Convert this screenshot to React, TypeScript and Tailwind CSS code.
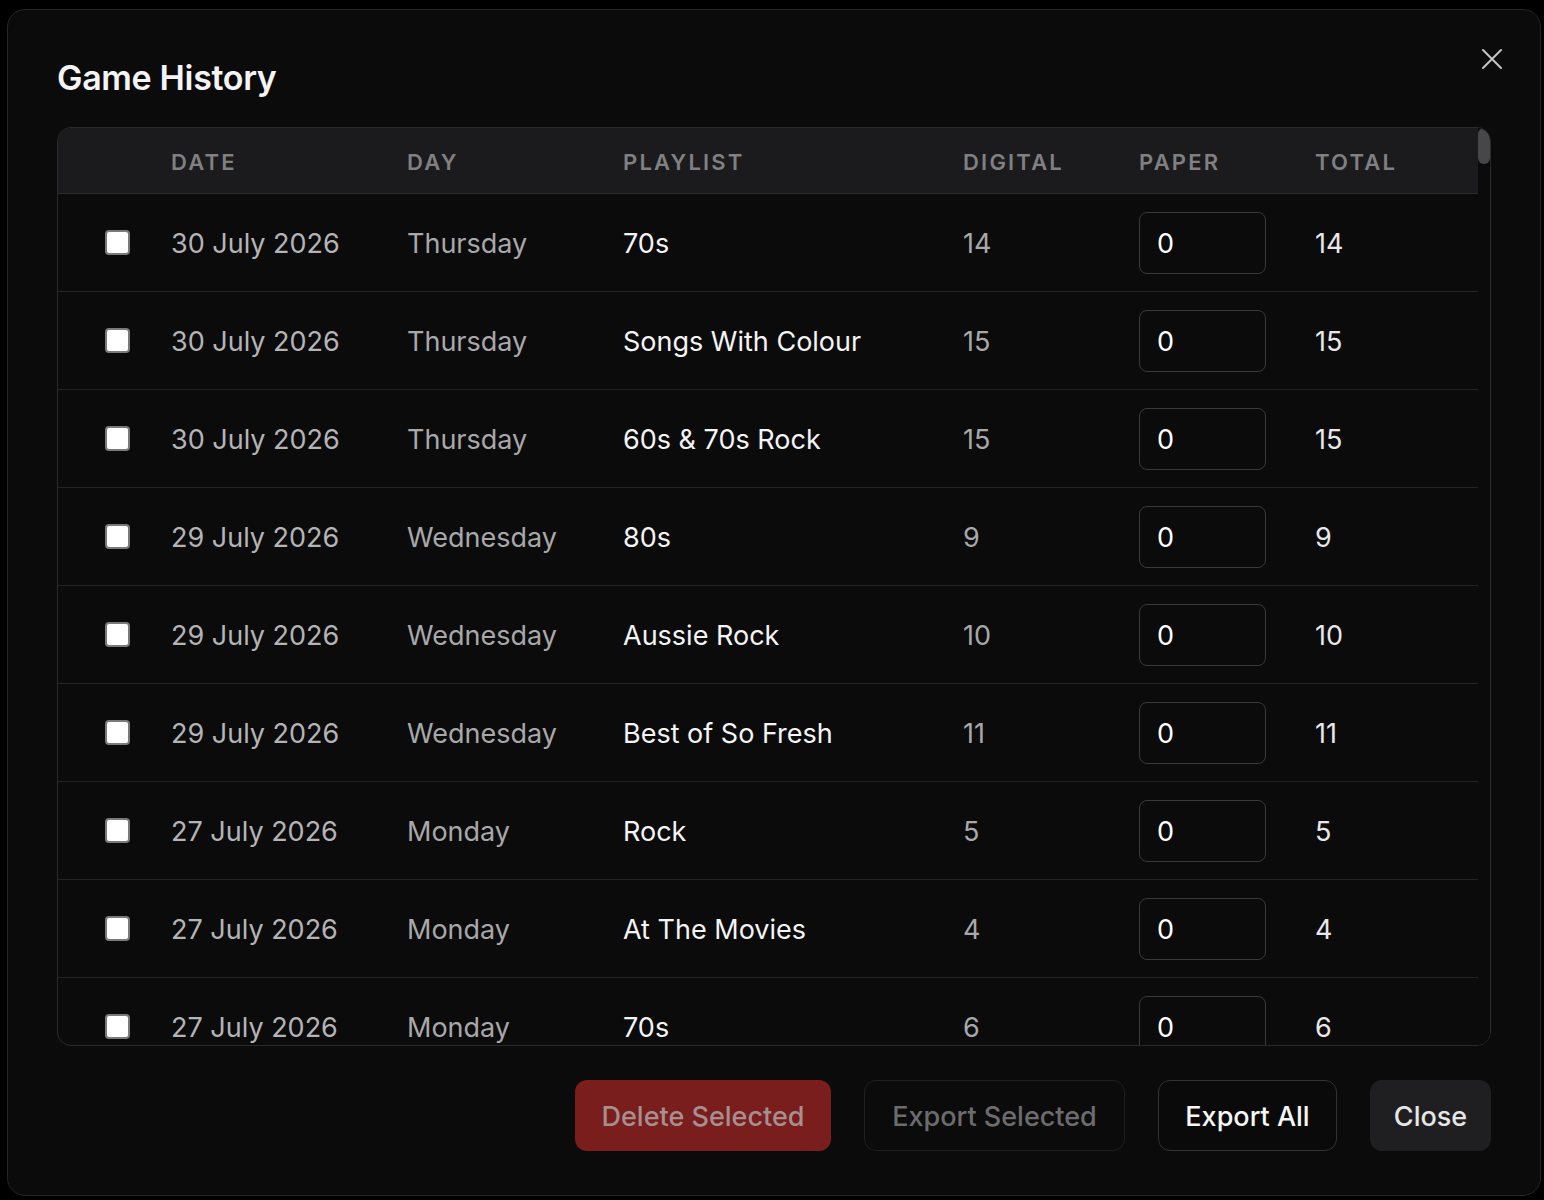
import React from "react";

const games = [
  { date: "30 July 2026", day: "Thursday", playlist: "70s", digital: 14, paper: 0 },
  { date: "30 July 2026", day: "Thursday", playlist: "Songs With Colour", digital: 15, paper: 0 },
  { date: "30 July 2026", day: "Thursday", playlist: "60s & 70s Rock", digital: 15, paper: 0 },
  { date: "29 July 2026", day: "Wednesday", playlist: "80s", digital: 9, paper: 0 },
  { date: "29 July 2026", day: "Wednesday", playlist: "Aussie Rock", digital: 10, paper: 0 },
  { date: "29 July 2026", day: "Wednesday", playlist: "Best of So Fresh", digital: 11, paper: 0 },
  { date: "27 July 2026", day: "Monday", playlist: "Rock", digital: 5, paper: 0 },
  { date: "27 July 2026", day: "Monday", playlist: "At The Movies", digital: 4, paper: 0 },
  { date: "27 July 2026", day: "Monday", playlist: "70s", digital: 6, paper: 0 },
];

const cols = "grid grid-cols-[113px_236px_216px_340px_176px_176px_1fr] items-center";

export default function App() {
  return (
    <div className="min-h-screen bg-black pt-[9px] pl-[7px] pr-[3px] pb-[4px] font-['Inter','Noto_Sans',sans-serif]">
      <div className="relative flex h-[1187px] flex-col rounded-[18px] border border-[#262628] bg-[#0b0b0c] px-[49px] pt-[46px]">
        <button className="absolute right-[37px] top-[38px] text-[#c4c4c4]" aria-label="Close">
          <svg width="22" height="22" viewBox="0 0 22 22" fill="none" stroke="currentColor" strokeWidth="2" strokeLinecap="round">
            <path d="M2 2 20 20M20 2 2 20" />
          </svg>
        </button>

        <h2 className="text-[34px] leading-[44px] font-semibold tracking-[-0.01em] text-[#f4f4f5]">Game History</h2>

        <div className="mt-[27px] flex h-[919px] overflow-hidden rounded-[14px] border border-[#2a2a2c]">
          <div className="flex-1 overflow-hidden">
            <div className={`${cols} h-[66px] border-b border-[#2c2c2e] bg-[#1b1b1d] pt-[4px] text-[22px] font-semibold uppercase tracking-[0.1em] text-[#808082]`}>
              <div />
              <div>Date</div>
              <div>Day</div>
              <div>Playlist</div>
              <div>Digital</div>
              <div>Paper</div>
              <div>Total</div>
            </div>
            {games.map((g, i) => (
              <div key={i} className={`${cols} h-[98px] border-b border-[#232325] text-[27px]`}>
                <div className="flex pl-[47px]">
                  <span className="h-[25px] w-[25px] rounded-[4px] border-2 border-[#7a7a7a] bg-white" />
                </div>
                <div className="pt-[4px] text-[#b4b4b6]">{g.date}</div>
                <div className="pt-[4px] text-[#a8a8aa]">{g.day}</div>
                <div className="pt-[4px] text-[#f4f4f5]">{g.playlist}</div>
                <div className="pt-[4px] text-[#a8a8aa]">{g.digital}</div>
                <div>
                  <div className="flex h-[62px] w-[127px] items-center rounded-[8px] border border-[#3a3a3c] bg-[#0b0b0c] pl-[17px] pt-[4px] text-white">
                    {g.paper}
                  </div>
                </div>
                <div className="pt-[4px] text-[#e8e8ea]">{g.digital + g.paper}</div>
              </div>
            ))}
          </div>
          <div className="w-[12px] bg-[#0b0b0c]">
            <div className="h-[36px] w-[12px] rounded-full bg-[#474749]" />
          </div>
        </div>

        <div className="mt-[34px] flex justify-end gap-[33px] text-[27px] font-medium">
          <button className="h-[71px] w-[256px] rounded-[12px] bg-[#7a1d1d] pt-[3px] text-[#a68f8f]">Delete Selected</button>
          <button className="h-[71px] w-[261px] rounded-[12px] border border-[#1f1f21] pt-[3px] text-[#6c6c6e]">Export Selected</button>
          <button className="h-[71px] w-[179px] rounded-[12px] border border-[#333335] bg-[#0a0a0b] pt-[3px] text-[#f7f7f7]">Export All</button>
          <button className="h-[71px] w-[121px] rounded-[12px] bg-[#1f1f21] pt-[3px] text-[#e6e6e6]">Close</button>
        </div>
      </div>
    </div>
  );
}
